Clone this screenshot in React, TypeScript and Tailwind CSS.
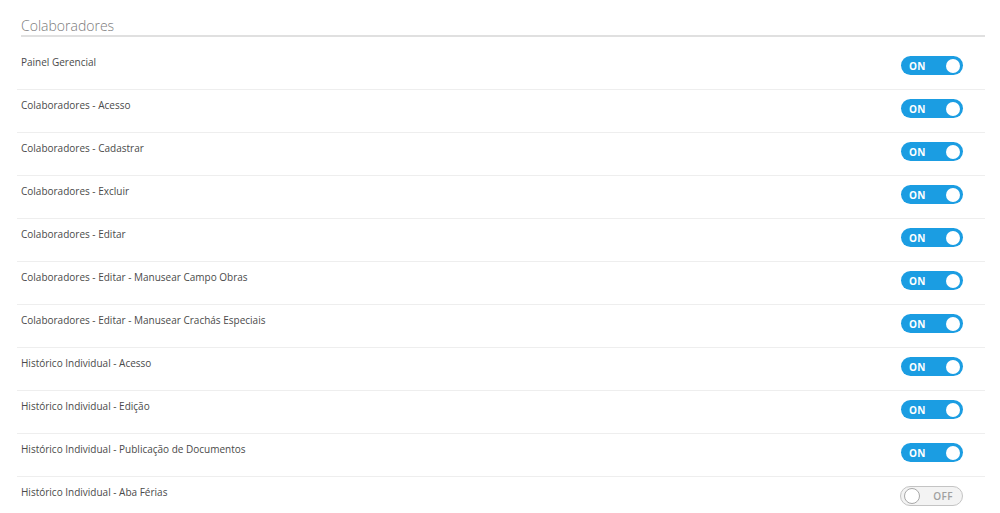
const permissions: { label: string; on: boolean }[] = [
  { label: 'Painel Gerencial', on: true },
  { label: 'Colaboradores - Acesso', on: true },
  { label: 'Colaboradores - Cadastrar', on: true },
  { label: 'Colaboradores - Excluir', on: true },
  { label: 'Colaboradores - Editar', on: true },
  { label: 'Colaboradores - Editar - Manusear Campo Obras', on: true },
  { label: 'Colaboradores - Editar - Manusear Crachás Especiais', on: true },
  { label: 'Histórico Individual - Acesso', on: true },
  { label: 'Histórico Individual - Edição', on: true },
  { label: 'Histórico Individual - Publicação de Documentos', on: true },
  { label: 'Histórico Individual - Aba Férias', on: false },
]

function Toggle({ on }: { on: boolean }) {
  if (on) {
    return (
      <div className="mt-[9px] flex h-[19px] w-[62px] items-center justify-between rounded-full bg-[#1b9de2] pl-[8px] pr-[3px]">
        <span className="text-[10px] font-bold leading-none tracking-[0.04em] text-white">ON</span>
        <span className="h-[14px] w-[14px] rounded-full bg-white" />
      </div>
    )
  }
  return (
    <div className="mt-[9px] flex h-[20px] w-[63px] items-center justify-between rounded-full border border-[#c4c4c4] bg-[#f3f3f3] pl-[3px] pr-[9px]">
      <span className="h-[16px] w-[16px] rounded-full border border-[#a8a8a8] bg-white" />
      <span className="text-[10px] font-semibold leading-none tracking-[0.04em] text-[#a0a0a0]">OFF</span>
    </div>
  )
}

export default function App() {
  return (
    <div className="h-[513px] w-[1000px] overflow-hidden bg-white font-['Open_Sans',sans-serif]">
      <div className="pl-[17px] pr-[15px]">
        <div className="ml-1 border-b-2 border-[#e0e0e0] pt-[17px]">
          <h2 className="text-[14px] font-light leading-[18px] text-[#7a7a7a]">Colaboradores</h2>
        </div>

        <div className="mt-[10px]">
          {permissions.map((p) => (
            <div
              key={p.label}
              className="flex h-[43px] items-start justify-between border-b border-[#eeeeee] pl-1 pr-[22px]"
            >
              <p className="pt-[8px] text-[10px] leading-[14px] text-[#4a4a4a]">{p.label}</p>
              <Toggle on={p.on} />
            </div>
          ))}
        </div>
      </div>
    </div>
  )
}
